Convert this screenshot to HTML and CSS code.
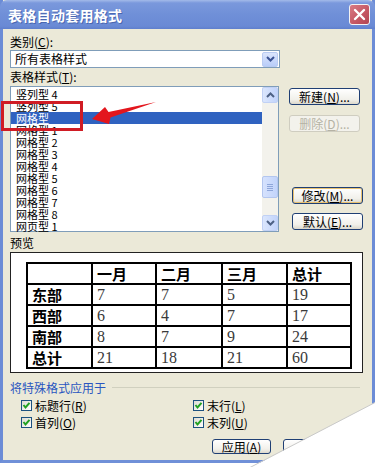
FILE: index.html
```html
<!DOCTYPE html>
<html>
<head>
<meta charset="utf-8">
<link rel="stylesheet" href="styles.css">
</head>
<body>
<div class="win">
  <div class="titlebar">
    <span class="title">表格自动套用格式</span>
    <span class="close"><svg width="13" height="13" viewBox="0 0 13 13"><path d="M2 2 L11 11 M11 2 L2 11" stroke="#fff" stroke-width="2.4" stroke-linecap="round"/></svg></span>
  </div>
  <div class="body">
    <div class="label l1">类别(<u>C</u>):</div>
    <div class="combo">
      <span class="combo-text">所有表格样式</span>
      <span class="combo-btn"><svg width="9" height="6" viewBox="0 0 9 6"><path d="M1 1 L4.5 4.5 L8 1" fill="none" stroke="#3b5394" stroke-width="2"/></svg></span>
    </div>
    <div class="label l2">表格样式(<u>T</u>):</div>
    <div class="main">
      <div class="list">
        <div class="items">
          <div class="item">竖列型 4</div>
          <div class="item">竖列型 5</div>
          <div class="item sel">网格型</div>
          <div class="item">网格型 1</div>
          <div class="item">网格型 2</div>
          <div class="item">网格型 3</div>
          <div class="item">网格型 4</div>
          <div class="item">网格型 5</div>
          <div class="item">网格型 6</div>
          <div class="item">网格型 7</div>
          <div class="item">网格型 8</div>
          <div class="item">网页型 1</div>
        </div>
        <div class="scroll">
          <div class="sb-btn"><svg width="9" height="6" viewBox="0 0 9 6"><path d="M1 5 L4.5 1.5 L8 5" fill="none" stroke="#4d6185" stroke-width="2"/></svg></div>
          <div class="sb-track"><div class="sb-thumb"><i></i><i></i><i></i><i></i></div></div>
          <div class="sb-btn"><svg width="9" height="6" viewBox="0 0 9 6"><path d="M1 1 L4.5 4.5 L8 1" fill="none" stroke="#4d6185" stroke-width="2"/></svg></div>
        </div>
      </div>
      <div class="btns">
        <div class="btn">新建(<u>N</u>)...</div>
        <div class="btn disabled">删除(<u>D</u>)...</div>
        <div class="spacer"></div>
        <div class="btn focus shift">修改(<u>M</u>)...</div>
        <div class="btn shift">默认(<u>E</u>)...</div>
      </div>
    </div>
    <div class="label l3">预览</div>
    <div class="preview">
      <table class="tbl">
        <tr><th></th><th>一月</th><th>二月</th><th>三月</th><th>总计</th></tr>
        <tr><th>东部</th><td>7</td><td>7</td><td>5</td><td>19</td></tr>
        <tr><th>西部</th><td>6</td><td>4</td><td>7</td><td>17</td></tr>
        <tr><th>南部</th><td>8</td><td>7</td><td>9</td><td>24</td></tr>
        <tr><th>总计</th><td>21</td><td>18</td><td>21</td><td>60</td></tr>
      </table>
    </div>
    <div class="group"><span class="group-label">将特殊格式应用于</span><span class="group-line"></span></div>
    <div class="checks">
      <div class="check-row">
        <div class="chk"><span class="box"><svg width="9" height="9" viewBox="0 0 9 9"><path d="M1.5 4 L3.5 6.5 L7.5 1.8" fill="none" stroke="#21a121" stroke-width="2"/></svg></span>标题行(<u>R</u>)</div>
        <div class="chk"><span class="box"><svg width="9" height="9" viewBox="0 0 9 9"><path d="M1.5 4 L3.5 6.5 L7.5 1.8" fill="none" stroke="#21a121" stroke-width="2"/></svg></span>末行(<u>L</u>)</div>
      </div>
      <div class="check-row">
        <div class="chk"><span class="box"><svg width="9" height="9" viewBox="0 0 9 9"><path d="M1.5 4 L3.5 6.5 L7.5 1.8" fill="none" stroke="#21a121" stroke-width="2"/></svg></span>首列(<u>O</u>)</div>
        <div class="chk"><span class="box"><svg width="9" height="9" viewBox="0 0 9 9"><path d="M1.5 4 L3.5 6.5 L7.5 1.8" fill="none" stroke="#21a121" stroke-width="2"/></svg></span>末列(<u>U</u>)</div>
      </div>
    </div>
    <div class="actions">
      <div class="btn apply">应用(<u>A</u>)</div>
      <div class="btn apply">关闭</div>
    </div>
  </div>
  <div class="redbox"></div>
  <svg class="arrow" width="70" height="32" viewBox="90 100 70 32">
    <polygon points="92,119 105,107 108.5,112 156,102 110.5,117.5 109,124" fill="#e3161d"/>
  </svg>
  <svg class="curl" width="126" height="66" viewBox="250 402 126 66">
    <polygon points="250,468 376,402 376,468" fill="#fff"/>
    <line x1="250" y1="467.5" x2="376" y2="402" stroke="#c9c9c9" stroke-width="1"/>
  </svg>
</div>
</body>
</html>
```
FILE: styles.css
```css
html, body {
  margin: 0;
  padding: 0;
  background: #fff;
}
body {
  width: 375px;
  height: 467px;
  overflow: hidden;
  font-family: "Noto Sans CJK SC", "DejaVu Sans", sans-serif;
  font-size: 12px;
  color: #000;
}
u { text-decoration: underline; }
.win {
  position: relative;
  width: 375px;
  height: 463px;
  box-sizing: border-box;
  background: #ebe9d8;
  border-left: 3px solid #6c8cd6;
  border-right: 3px solid #6c8cd6;
  border-bottom: 3px solid #7090d8;
}
.titlebar {
  margin: 0 -3px;
  height: 29px;
  border-radius: 7px 7px 0 0;
  background: linear-gradient(#a3bae9 0, #7a98dc 3px, #7090d8 14px, #6a8ad5 26px, #5f7fcd 29px);
  display: flex;
  align-items: center;
  justify-content: space-between;
  padding: 0 5px 0 8px;
}
.title {
  color: #fff;
  font-weight: 700;
  font-size: 14px;
  line-height: 16px;
  letter-spacing: 0.3px;
  text-shadow: 1px 1px 0 #4a67b0;
}
.close {
  width: 19px;
  height: 19px;
  border: 1px solid #f3f3f3;
  border-radius: 3px;
  background: linear-gradient(135deg, #d97b84, #c45662 60%, #b24552);
  display: flex;
  align-items: center;
  justify-content: center;
}
.body {
  padding: 0 7px;
  display: flex;
  flex-direction: column;
}
.label {
  height: 14px;
  line-height: 14px;
}
.l1 { margin-top: 6px; }
.l2 { margin-top: 2px; }
.l3 { margin-top: 4px; }
.combo {
  margin-top: 1px;
  width: 270px;
  height: 18px;
  box-sizing: border-box;
  border: 1px solid #7f9db9;
  background: #fff;
  display: flex;
  align-items: center;
  justify-content: space-between;
  padding: 0 1px 0 4px;
}
.combo-text { line-height: 14px; }
.combo-btn {
  width: 16px;
  height: 15px;
  box-sizing: border-box;
  border: 1px solid #b9cbf2;
  border-radius: 2px;
  background: linear-gradient(#dbe5fc, #b9cdf9);
  display: flex;
  align-items: center;
  justify-content: center;
}
.main {
  margin-top: 2px;
  display: flex;
  height: 146px;
}
.list {
  width: 269px;
  height: 146px;
  box-sizing: border-box;
  border: 1px solid #7f9db9;
  background: #fff;
  display: flex;
}
.items {
  flex: 1;
  padding-top: 1px;
}
.item {
  height: 12px;
  line-height: 12px;
  font-size: 11px;
  padding-left: 5px;
  white-space: pre;
}
.item.sel {
  background: #2f62c0;
  color: #fff;
}
.scroll {
  width: 16px;
  display: flex;
  flex-direction: column;
  background: #f3f2ec;
}
.sb-btn {
  height: 16px;
  box-sizing: border-box;
  border: 1px solid #c1d1f5;
  border-radius: 2px;
  background: linear-gradient(90deg, #dbe6fd, #c2d4fb);
  display: flex;
  align-items: center;
  justify-content: center;
}
.sb-track {
  flex: 1;
}
.sb-thumb {
  margin-top: 73px;
  height: 22px;
  box-sizing: border-box;
  border: 1px solid #b3c6ef;
  border-radius: 2px;
  background: linear-gradient(90deg, #d6e2fd, #c2d4fb);
  display: flex;
  flex-direction: column;
  align-items: center;
  justify-content: center;
  gap: 1px;
}
.sb-thumb i {
  display: block;
  width: 6px;
  height: 1px;
  background: #8ea6da;
}
.btns {
  margin-left: 10px;
  padding-top: 2px;
  display: flex;
  flex-direction: column;
  width: 74px;
}
.btn {
  width: 71px;
  height: 17px;
  box-sizing: border-box;
  border: 1px solid #1f3f74;
  border-radius: 3px;
  background: linear-gradient(#ffffff, #f1f0ea 70%, #dcd8cc);
  display: flex;
  align-items: center;
  justify-content: center;
  line-height: 14px;
  white-space: nowrap;
}
.btn + .btn { margin-top: 10px; }
.btn.disabled {
  margin-top: 10px;
  color: #b5b2a4;
  border-color: #cfcdc0;
  background: #f3f2ec;
}
.spacer { height: 55px; }
.spacer + .btn { margin-top: 0; }
.btn.shift { margin-left: 3px; }
.btn.focus {
  box-shadow: inset 0 0 0 1px #e8c170;
}
.btn.shift + .btn.shift { margin-top: 9px; }
.preview {
  margin-top: 2px;
  height: 121px;
  width: 353px;
  box-sizing: border-box;
  border: 1px solid #222;
  background: #fff;
  padding: 9px 0 0 15px;
}
.tbl {
  border-collapse: collapse;
  width: 326px;
  table-layout: fixed;
}
.tbl th, .tbl td {
  border: 2px solid #000;
  height: 19px;
  padding: 0 0 0 4px;
  text-align: left;
  line-height: 18px;
  white-space: nowrap;
}
.tbl th {
  font-weight: 700;
  font-size: 15px;
}
.tbl td {
  font-family: "Liberation Serif", serif;
  font-size: 16px;
  color: #3a3a3a;
}
.tbl tr > :nth-child(1) { width: 59px; }
.tbl tr > :nth-child(2) { width: 58px; }
.tbl tr > :nth-child(3) { width: 60px; }
.tbl tr > :nth-child(4) { width: 59px; }
.group {
  margin-top: 8px;
  height: 13px;
  display: flex;
  align-items: center;
  gap: 6px;
}
.group-label {
  color: #2a56c0;
  line-height: 13px;
}
.group-line {
  flex: 1;
  height: 1px;
  background: #d0d0bf;
  margin-right: 5px;
}
.checks {
  margin-top: 3px;
  padding-left: 11px;
}
.check-row {
  height: 17px;
  display: flex;
  align-items: center;
}
.chk {
  width: 188px;
  display: flex;
  align-items: center;
  line-height: 14px;
}
.box {
  width: 11px;
  height: 11px;
  box-sizing: border-box;
  border: 1px solid #1c5180;
  background: linear-gradient(135deg, #dcdbd2, #fff);
  display: flex;
  align-items: center;
  justify-content: center;
  margin-right: 3px;
}
.actions {
  margin-top: 8px;
  padding-left: 202px;
  display: flex;
  gap: 12px;
}
.btn.apply {
  width: 59px;
  height: 15px;
}
.actions .btn + .btn { margin-top: 0; }
.redbox {
  position: absolute;
  left: -2px;
  top: 101px;
  width: 82px;
  height: 30px;
  box-sizing: border-box;
  border: 3px solid #d01c24;
}
.arrow {
  position: absolute;
  left: 87px;
  top: 100px;
}
.curl {
  position: absolute;
  left: 247px;
  top: 402px;
}
```
